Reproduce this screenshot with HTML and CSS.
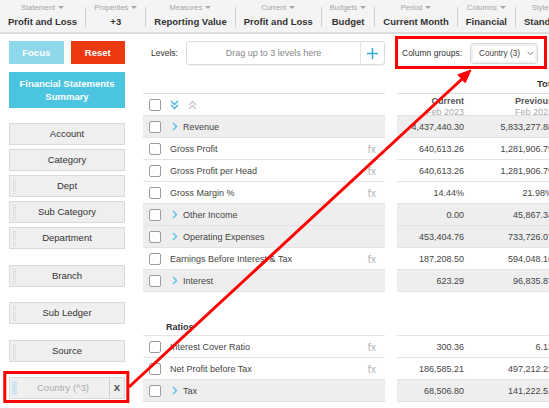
FILE: index.html
```html
<!DOCTYPE html>
<html>
<head>
    <title>Financial Statements Summary</title>
    <link rel="stylesheet" href="styles.css">
</head>
<body>

<div class="topbar">
    <div class="tb-item"><div class="tb-label">Statement</div><div class="tb-value">Profit and Loss</div></div>
    <div class="tb-sep"></div>
    <div class="tb-item"><div class="tb-label">Properties</div><div class="tb-value">+3</div></div>
    <div class="tb-sep"></div>
    <div class="tb-item"><div class="tb-label">Measures</div><div class="tb-value">Reporting Value</div></div>
    <div class="tb-sep"></div>
    <div class="tb-item"><div class="tb-label">Current</div><div class="tb-value">Profit and Loss</div></div>
    <div class="tb-sep"></div>
    <div class="tb-item"><div class="tb-label">Budgets</div><div class="tb-value">Budget</div></div>
    <div class="tb-sep"></div>
    <div class="tb-item"><div class="tb-label">Period</div><div class="tb-value">Current Month</div></div>
    <div class="tb-sep"></div>
    <div class="tb-item"><div class="tb-label">Columns</div><div class="tb-value">Financial</div></div>
    <div class="tb-sep"></div>
    <div class="tb-item"><div class="tb-label">Style</div><div class="tb-value">Standard</div></div>
</div>

<div class="page">
    <div class="sidebar">
        <div class="btn-row">
            <div class="btn btn-focus">Focus</div>
            <div class="btn btn-reset">Reset</div>
        </div>
        <div class="fss">Financial Statements<br>Summary</div>

        <div class="dims">
            <div class="dim">Account</div>
            <div class="dim">Category</div>
            <div class="dim grip">Dept</div>
            <div class="dim grip">Sub Category</div>
            <div class="dim grip">Department</div>
            <div class="dim grip spaced">Branch</div>
            <div class="dim grip spaced">Sub Ledger</div>
            <div class="dim grip spaced">Source</div>
            <div class="dim country spaced">
                <span class="country-bar"></span>
                <span class="country-label">Country (^3)</span>
                <span class="country-x">X</span>
            </div>
        </div>
    </div>

    <div class="main">
        <div class="toolbar">
            <div class="levels">
                <span class="levels-label">Levels:</span>
                <div class="dropzone">
                    <div class="dropzone-text">Drag up to 3 levels here</div>
                    <div class="dropzone-add">
                        <svg width="11" height="11" viewBox="0 0 11 11"><path d="M5.5 0v11M0 5.5h11" stroke="#35a9dc" stroke-width="1.5"/></svg>
                    </div>
                </div>
            </div>
            <div class="colgroups">
                <span class="colgroups-label">Column groups:</span>
                <div class="colgroups-select">
                    <span>Country (3)</span>
                    <svg width="7" height="5" viewBox="0 0 7 5"><path d="M0.5 0.8l3 3 3-3" stroke="#777" fill="none"/></svg>
                </div>
            </div>
        </div>

        <div class="grid">
            <div class="frozen">
                <div class="group-head"></div>
                <div class="sub-head">
                    <span class="check"></span>
                    <svg class="expand-all" width="9" height="10" viewBox="0 0 9 10"><path d="M1 1l3.5 3.5L8 1M1 5l3.5 3.5L8 5" fill="none" stroke="#3fb2e0" stroke-width="1.3"/></svg>
                    <svg class="collapse-all" width="9" height="10" viewBox="0 0 9 10"><path d="M1 5l3.5-3.5L8 5M1 9l3.5-3.5L8 9" fill="none" stroke="#c8c8c8" stroke-width="1.3"/></svg>
                </div>
                <div class="row parent first"><span class="check"></span><svg class="chev" width="6" height="9" viewBox="0 0 6 9"><path d="M1 1l3.5 3.5L1 8" fill="none" stroke="#62c3e3" stroke-width="1.5"/></svg><span class="name">Revenue</span></div>
                <div class="row"><span class="check"></span><span class="name">Gross Profit</span><span class="fx">fx</span></div>
                <div class="row"><span class="check"></span><span class="name">Gross Profit per Head</span><span class="fx">fx</span></div>
                <div class="row"><span class="check"></span><span class="name">Gross Margin %</span><span class="fx">fx</span></div>
                <div class="row parent"><span class="check"></span><svg class="chev" width="6" height="9" viewBox="0 0 6 9"><path d="M1 1l3.5 3.5L1 8" fill="none" stroke="#62c3e3" stroke-width="1.5"/></svg><span class="name">Other Income</span></div>
                <div class="row parent"><span class="check"></span><svg class="chev" width="6" height="9" viewBox="0 0 6 9"><path d="M1 1l3.5 3.5L1 8" fill="none" stroke="#62c3e3" stroke-width="1.5"/></svg><span class="name">Operating Expenses</span></div>
                <div class="row"><span class="check"></span><span class="name">Earnings Before Interest &amp; Tax</span><span class="fx">fx</span></div>
                <div class="row parent"><span class="check"></span><svg class="chev" width="6" height="9" viewBox="0 0 6 9"><path d="M1 1l3.5 3.5L1 8" fill="none" stroke="#62c3e3" stroke-width="1.5"/></svg><span class="name">Interest</span></div>

                <div class="section-gap"><span class="section-title">Ratios</span></div>
                <div class="row"><span class="check"></span><span class="name">Interest Cover Ratio</span><span class="fx">fx</span></div>
                <div class="row"><span class="check"></span><span class="name">Net Profit before Tax</span><span class="fx">fx</span></div>
                <div class="row parent"><span class="check"></span><svg class="chev" width="6" height="9" viewBox="0 0 6 9"><path d="M1 1l3.5 3.5L1 8" fill="none" stroke="#62c3e3" stroke-width="1.5"/></svg><span class="name">Tax</span></div>
            </div>

            <div class="scroll">
                <div class="group-head"><span class="group-title">Total</span></div>
                <div class="sub-head cols">
                    <div class="col"><b>Current</b><span>Feb 2023</span></div>
                    <div class="col wide"><b>Previous</b><span>Feb 2023</span></div>
                </div>
                <div class="row parent first"><span class="val">4,437,440.30</span><span class="val wide">5,833,277.88</span></div>
                <div class="row"><span class="val">640,613.26</span><span class="val wide">1,281,906.79</span></div>
                <div class="row"><span class="val">640,613.26</span><span class="val wide">1,281,906.79</span></div>
                <div class="row"><span class="val">14.44%</span><span class="val wide">21.98%</span></div>
                <div class="row parent"><span class="val">0.00</span><span class="val wide">45,867.34</span></div>
                <div class="row parent"><span class="val">453,404.76</span><span class="val wide">733,726.07</span></div>
                <div class="row"><span class="val">187,208.50</span><span class="val wide">594,048.16</span></div>
                <div class="row parent"><span class="val">623.29</span><span class="val wide">96,835.87</span></div>

                <div class="section-gap"></div>
                <div class="row"><span class="val">300.36</span><span class="val wide">6.13</span></div>
                <div class="row"><span class="val">186,585.21</span><span class="val wide">497,212.22</span></div>
                <div class="row parent"><span class="val">68,506.80</span><span class="val wide">141,222.51</span></div>
            </div>
        </div>
    </div>
</div>

<svg class="annotations" width="549" height="408" viewBox="0 0 549 408">
    <rect x="4.8" y="372.5" width="123" height="29" fill="none" stroke="#ff0000" stroke-width="3"/>
    <rect x="396.5" y="37.5" width="149" height="30" fill="none" stroke="#ff0000" stroke-width="3"/>
    <line x1="129" y1="387" x2="462" y2="79" stroke="#ff0000" stroke-width="3"/>
    <polygon points="471,70 465.2,82.8 457.8,74.8" fill="#ff0000" stroke="#ff0000" stroke-width="1"/>
</svg>

</body>
</html>
```

FILE: styles.css
```css
* {
    box-sizing: border-box;
}
body {
    margin: 0;
    width: 549px;
    height: 408px;
    overflow: hidden;
    position: relative;
    font-family: "Liberation Sans", Arial, sans-serif;
    color: #444;
    background: #fff;
}
.topbar {
    display: flex;
    align-items: flex-start;
    height: 34px;
    background: #f4f4f4;
    border-bottom: 2px solid #dcdcdc;
    white-space: nowrap;
    overflow: hidden;
}
.tb-item {
    padding: 3px 8px 0;
    text-align: center;
    flex-shrink: 0;
}
.tb-label {
    font-size: 7.5px;
    line-height: 10px;
    color: #a5a5a5;
}
.tb-label::after {
    content: "";
    display: inline-block;
    margin-left: 3px;
    vertical-align: 1px;
    border-left: 3px solid transparent;
    border-right: 3px solid transparent;
    border-top: 3px solid #a5a5a5;
}
.tb-value {
    margin-top: 2px;
    font-size: 9.5px;
    line-height: 14px;
    font-weight: bold;
    color: #333;
}
.tb-sep {
    width: 1px;
    height: 20px;
    margin-top: 7px;
    background: #cfcfcf;
    flex-shrink: 0;
}
.page {
    display: flex;
}
.sidebar {
    width: 116px;
    margin-left: 9px;
    padding-top: 7px;
    flex-shrink: 0;
}
.btn-row {
    display: flex;
    gap: 7px;
}
.btn {
    flex: 1;
    height: 23px;
    line-height: 23px;
    text-align: center;
    font-size: 9.5px;
    font-weight: bold;
    color: #fff;
}
.btn-focus {
    background: #8fd7eb;
}
.btn-reset {
    background: #ec3a0e;
}
.fss {
    margin-top: 8px;
    height: 36px;
    padding-top: 5px;
    line-height: 13px;
    text-align: center;
    font-size: 9.5px;
    font-weight: bold;
    color: #fff;
    background: #4bc4df;
}
.dims {
    margin-top: 15px;
    display: flex;
    flex-direction: column;
    gap: 4px;
}
.dim {
    position: relative;
    height: 22px;
    line-height: 20px;
    border: 1px solid #d9d9d9;
    background: #efefef;
    text-align: center;
    font-size: 9.5px;
    color: #333;
}
.dim.spaced {
    margin-top: 11.5px;
}
/* dotted drag handle */
.grip::before {
    content: "";
    position: absolute;
    left: 2px;
    top: 2px;
    bottom: 2px;
    width: 5px;
    background-color: #d2d2d2;
    background-image: linear-gradient(90deg, #efefef 1px, transparent 1px), linear-gradient(#efefef 1px, transparent 1px);
    background-size: 2px 2px;
}
.country {
    display: flex;
    align-items: stretch;
}
.country-bar {
    width: 5px;
    margin: 3px 0 3px 2px;
    background: #cfe6ee;
}
.country-label {
    flex: 1;
    color: #aaa;
}
.country-x {
    width: 15px;
    border-left: 1px solid #cfcfcf;
    font-weight: bold;
    color: #444;
}
.main {
    margin-left: 18px;
    flex: 1;
    min-width: 0;
}
.toolbar {
    display: flex;
    align-items: center;
    height: 24px;
    margin-top: 7px;
}
.levels {
    width: 242px;
    display: flex;
    align-items: center;
    flex-shrink: 0;
}
.levels-label {
    padding-left: 8px;
    font-size: 8.5px;
    color: #333;
}
.dropzone {
    margin-left: auto;
    width: 199px;
    height: 24px;
    display: flex;
    border: 1px solid #dcdcdc;
    border-radius: 3px;
    box-shadow: 0 1px 1px rgba(0, 0, 0, 0.06);
}
.dropzone-text {
    flex: 1;
    line-height: 22px;
    text-align: center;
    font-size: 9px;
    color: #888;
}
.dropzone-add {
    width: 24px;
    display: flex;
    align-items: center;
    justify-content: center;
    border-left: 1px solid #e4e4e4;
}
.colgroups {
    margin-left: 17px;
    display: flex;
    align-items: center;
    white-space: nowrap;
}
.colgroups-label {
    font-size: 8.5px;
    color: #333;
}
.colgroups-select {
    margin-left: 8px;
    width: 68px;
    height: 21px;
    display: flex;
    align-items: center;
    gap: 7px;
    padding-left: 8px;
    border: 1px solid #d6d6d6;
    border-radius: 3px;
    box-shadow: inset 0 0 0 2px #f2f2f2;
    font-size: 8.2px;
    color: #444;
}
.grid {
    display: flex;
    margin-top: 10px;
}
.frozen {
    width: 242px;
    flex-shrink: 0;
}
.scroll {
    margin-left: 12px;
    flex: 1;
    min-width: 0;
    overflow: hidden;
}
.group-head {
    height: 19px;
    border-bottom: 1px solid #dcdcdc;
    white-space: nowrap;
}
.group-title {
    display: block;
    padding: 3px 0 0 140px;
    font-size: 9.5px;
    font-weight: bold;
    color: #333;
}
.sub-head {
    height: 22px;
    display: flex;
    align-items: center;
    padding-left: 6px;
    border-bottom: 1px solid #e3e3e3;
}
.sub-head.cols {
    padding-left: 0;
    align-items: stretch;
}
.col {
    width: 73px;
    flex-shrink: 0;
    padding: 2px 6px 0 0;
    text-align: right;
    font-size: 9px;
    line-height: 11px;
    white-space: nowrap;
}
.col b {
    display: block;
    color: #555;
}
.col span {
    display: block;
    color: #aaa;
}
.col.wide {
    width: 89px;
}
.expand-all {
    margin-left: 9px;
}
.collapse-all {
    margin-left: 9px;
}
.check {
    width: 12px;
    height: 12px;
    flex-shrink: 0;
    border: 1px solid #9c9c9c;
    border-radius: 2px;
    background: #fff;
}
.row {
    height: 22px;
    display: flex;
    align-items: center;
    padding-left: 6px;
    border-bottom: 1px solid #e3e3e3;
    font-size: 9px;
    white-space: nowrap;
}
.row.parent {
    background: #eeeeee;
}
.scroll .row {
    padding-left: 0;
}
.chev {
    margin-left: 11px;
    flex-shrink: 0;
}
.name {
    margin-left: 9px;
    color: #444;
}
.chev + .name {
    margin-left: 5px;
}
.fx {
    margin-left: auto;
    padding-right: 9px;
    font-size: 10.5px;
    color: #b3b3b3;
}
.val {
    width: 73px;
    flex-shrink: 0;
    padding-right: 6px;
    text-align: right;
    color: #444;
}
.val.wide {
    width: 89px;
}
.section-gap {
    height: 44px;
    padding: 24px 0 0 23px;
    border-bottom: 1px solid #e3e3e3;
}
.section-title {
    font-size: 9px;
    font-weight: bold;
    color: #333;
}
.annotations {
    position: absolute;
    left: 0;
    top: 0;
    pointer-events: none;
}
```
